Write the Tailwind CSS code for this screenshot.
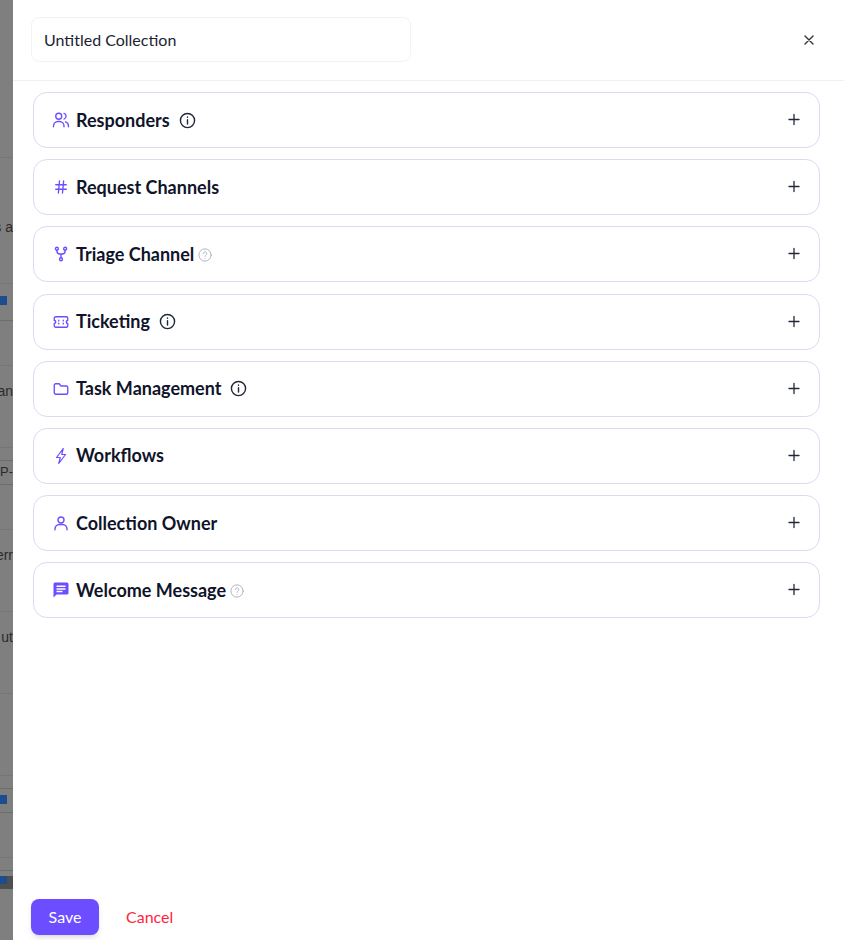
<!DOCTYPE html>
<html lang="en">
<head>
    <meta charset="UTF-8">
    <meta name="viewport" content="width=device-width, initial-scale=1.0">
    <title>Untitled Collection</title>
    <script src="https://cdn.jsdelivr.net/npm/@tailwindcss/browser@4"></script>
</head>
<body class="bg-white font-['Lato',sans-serif]">
    <div class="flex h-[940px] w-[844px] overflow-hidden">
        <!-- page behind the drawer -->
        <div class="relative h-full w-[13px] shrink-0 overflow-hidden bg-[#7f7f7f] text-[14px] text-[#2b2b2b] font-['Liberation_Sans',sans-serif]">
            <div class="absolute top-[157px] left-0 h-px w-full bg-[#767676]"></div>
            <div class="absolute top-[218px] right-0 whitespace-nowrap leading-[18px]">s a</div>
            <div class="absolute top-[283px] left-0 h-px w-full bg-[#767676]"></div>
            <div class="absolute top-[296px] left-0 h-[9px] w-[7px] bg-[#1d4c8f]"></div>
            <div class="absolute top-[320px] left-0 h-px w-full bg-[#6c6c6c]"></div>
            <div class="absolute top-[365px] left-0 h-px w-full bg-[#767676]"></div>
            <div class="absolute top-[382px] right-0 whitespace-nowrap leading-[18px]">an</div>
            <div class="absolute top-[447px] left-0 h-px w-full bg-[#767676]"></div>
            <div class="absolute top-[460px] left-0 h-px w-full bg-[#6c6c6c]"></div>
            <div class="absolute top-[464px] right-0 whitespace-nowrap text-[13px] leading-[16px]">P-</div>
            <div class="absolute top-[484px] left-0 h-px w-full bg-[#6c6c6c]"></div>
            <div class="absolute top-[529px] left-0 h-px w-full bg-[#767676]"></div>
            <div class="absolute top-[546px] right-0 whitespace-nowrap leading-[18px]">err</div>
            <div class="absolute top-[611px] left-0 h-px w-full bg-[#767676]"></div>
            <div class="absolute top-[628px] right-0 whitespace-nowrap leading-[18px]">ut</div>
            <div class="absolute top-[693px] left-0 h-px w-full bg-[#767676]"></div>
            <div class="absolute top-[775px] left-0 h-px w-full bg-[#767676]"></div>
            <div class="absolute top-[788px] left-0 h-px w-full bg-[#6c6c6c]"></div>
            <div class="absolute top-[795px] left-0 h-[9px] w-[7px] bg-[#1d4c8f]"></div>
            <div class="absolute top-[812px] left-0 h-px w-full bg-[#6c6c6c]"></div>
            <div class="absolute top-[857px] left-0 h-px w-full bg-[#767676]"></div>
            <div class="absolute top-[870px] left-0 h-px w-full bg-[#6c6c6c]"></div>
            <div class="absolute top-[876px] left-0 h-[13px] w-full bg-[#4f4f4f]"></div>
            <div class="absolute top-[876px] left-0 h-[8px] w-[7px] bg-[#1d4c8f]"></div>
        </div>

        <!-- drawer -->
        <div class="flex h-full min-w-0 flex-1 flex-col bg-white">
            <div class="flex h-[81px] shrink-0 items-center justify-between border-b border-[#f0f0f2] pr-[27px] pl-[18px]">
                <div class="mt-[-1px] flex h-[45px] w-[380px] items-center rounded-lg border border-[#f3f3f5] px-[12px] text-[16px] text-[#1c2333]">Untitled Collection</div>
                <svg class="h-[16px] w-[16px] text-[#333]" viewBox="0 0 16 16" fill="none" stroke="currentColor" stroke-width="1.4" stroke-linecap="round"><path d="M4 4l8 8M12 4l-8 8"/></svg>
            </div>

            <div class="flex flex-1 flex-col gap-[11.2px] pt-[11px] pr-[24px] pl-[20px]">
                <div class="flex h-[56px] shrink-0 items-center justify-between rounded-[14px] border border-[#dcdaee] pr-[18px] pl-[18px]">
                    <div class="flex items-center text-[18px] font-bold text-[#10142a]">
                        <svg class="mr-[6px] h-[18px] w-[18px] text-[#6c4dff]" viewBox="0 0 24 24" fill="none" stroke="currentColor" stroke-width="1.8" stroke-linecap="round" stroke-linejoin="round"><circle cx="9" cy="7" r="4"/><path d="M2 21v-1a6 6 0 0 1 6-6h2a6 6 0 0 1 6 6v1"/><path d="M16 3.2a4 4 0 0 1 0 7.6"/><path d="M22 21v-1a6 6 0 0 0-4-5.6"/></svg>
                        <span>Responders</span>
                        <svg class="ml-[9px] h-[17px] w-[17px] text-[#222838]" viewBox="0 0 24 24" fill="none" stroke="currentColor" stroke-width="2" stroke-linecap="round"><circle cx="12" cy="12" r="10"/><path d="M12 11v6M12 7v.5"/></svg>
                    </div>
                    <svg class="h-[14px] w-[14px] text-[#222838]" viewBox="0 0 14 14" fill="none" stroke="currentColor" stroke-width="1.3" stroke-linecap="round"><path d="M7 1.5v10M2 6.5h10"/></svg>
                </div>
                <div class="flex h-[56px] shrink-0 items-center justify-between rounded-[14px] border border-[#dcdaee] pr-[18px] pl-[18px]">
                    <div class="flex items-center text-[18px] font-bold text-[#10142a]">
                        <svg class="mr-[6px] h-[18px] w-[18px] text-[#6c4dff]" viewBox="0 0 24 24" fill="none" stroke="currentColor" stroke-width="1.8" stroke-linecap="round"><path d="M5 9h14M5 15h14M10 4L8.5 20M15.5 4L14 20"/></svg>
                        <span>Request Channels</span>
                    </div>
                    <svg class="h-[14px] w-[14px] text-[#222838]" viewBox="0 0 14 14" fill="none" stroke="currentColor" stroke-width="1.3" stroke-linecap="round"><path d="M7 1.5v10M2 6.5h10"/></svg>
                </div>
                <div class="flex h-[56px] shrink-0 items-center justify-between rounded-[14px] border border-[#dcdaee] pr-[18px] pl-[18px]">
                    <div class="flex items-center text-[18px] font-bold text-[#10142a]">
                        <svg class="mr-[6px] h-[18px] w-[18px] text-[#6c4dff]" viewBox="0 0 24 24" fill="none" stroke="currentColor" stroke-width="1.8" stroke-linecap="round" stroke-linejoin="round"><circle cx="6.5" cy="5" r="2"/><circle cx="17.5" cy="5" r="2"/><circle cx="12" cy="19" r="2"/><path d="M6.5 7v1a4 4 0 0 0 4 4h3a4 4 0 0 0 4-4V7M12 12v5"/></svg>
                        <span>Triage Channel</span>
                        <svg class="mt-[2px] ml-[4px] h-[14px] w-[14px] text-[#a9b0bf]" viewBox="0 0 24 24" fill="none" stroke="currentColor" stroke-width="1.6" stroke-linecap="round"><circle cx="12" cy="12" r="10.5"/><path d="M9 9.5a3 3 0 1 1 4.5 2.6c-1 .6-1.5 1.2-1.5 2.4M12 18v.3"/></svg>
                    </div>
                    <svg class="h-[14px] w-[14px] text-[#222838]" viewBox="0 0 14 14" fill="none" stroke="currentColor" stroke-width="1.3" stroke-linecap="round"><path d="M7 1.5v10M2 6.5h10"/></svg>
                </div>
                <div class="flex h-[56px] shrink-0 items-center justify-between rounded-[14px] border border-[#dcdaee] pr-[18px] pl-[18px]">
                    <div class="flex items-center text-[18px] font-bold text-[#10142a]">
                        <svg class="mr-[6px] h-[18px] w-[18px] text-[#6c4dff]" viewBox="0 0 24 24" fill="none" stroke="currentColor" stroke-width="1.8" stroke-linejoin="round"><path d="M3 7a2 2 0 0 1 2-2h14a2 2 0 0 1 2 2v3a2 2 0 0 0 0 4v3a2 2 0 0 1-2 2H5a2 2 0 0 1-2-2v-3a2 2 0 0 0 0-4z"/><path d="M9 9.5v1M9 13.500v1M15 9.500v1M15 13.500v1" stroke-linecap="round"/></svg>
                        <span>Ticketing</span>
                        <svg class="ml-[9px] h-[17px] w-[17px] text-[#222838]" viewBox="0 0 24 24" fill="none" stroke="currentColor" stroke-width="2" stroke-linecap="round"><circle cx="12" cy="12" r="10"/><path d="M12 11v6M12 7v.5"/></svg>
                    </div>
                    <svg class="h-[14px] w-[14px] text-[#222838]" viewBox="0 0 14 14" fill="none" stroke="currentColor" stroke-width="1.3" stroke-linecap="round"><path d="M7 1.5v10M2 6.5h10"/></svg>
                </div>
                <div class="flex h-[56px] shrink-0 items-center justify-between rounded-[14px] border border-[#dcdaee] pr-[18px] pl-[18px]">
                    <div class="flex items-center text-[18px] font-bold text-[#10142a]">
                        <svg class="mr-[6px] h-[18px] w-[18px] text-[#6c4dff]" viewBox="0 0 24 24" fill="none" stroke="currentColor" stroke-width="1.8" stroke-linejoin="round"><path d="M3 7a2 2 0 0 1 2-2h4.500l2.500 3h7a2 2 0 0 1 2 2v7a2 2 0 0 1-2 2H5a2 2 0 0 1-2-2z"/></svg>
                        <span>Task Management</span>
                        <svg class="ml-[9px] h-[17px] w-[17px] text-[#222838]" viewBox="0 0 24 24" fill="none" stroke="currentColor" stroke-width="2" stroke-linecap="round"><circle cx="12" cy="12" r="10"/><path d="M12 11v6M12 7v.5"/></svg>
                    </div>
                    <svg class="h-[14px] w-[14px] text-[#222838]" viewBox="0 0 14 14" fill="none" stroke="currentColor" stroke-width="1.3" stroke-linecap="round"><path d="M7 1.5v10M2 6.5h10"/></svg>
                </div>
                <div class="flex h-[56px] shrink-0 items-center justify-between rounded-[14px] border border-[#dcdaee] pr-[18px] pl-[18px]">
                    <div class="flex items-center text-[18px] font-bold text-[#10142a]">
                        <svg class="mr-[6px] h-[18px] w-[18px] text-[#6c4dff]" viewBox="0 0 24 24" fill="none" stroke="currentColor" stroke-width="1.6" stroke-linejoin="round"><path d="M15 2L6 14h5l-2 8 9-12h-5z"/></svg>
                        <span>Workflows</span>
                    </div>
                    <svg class="h-[14px] w-[14px] text-[#222838]" viewBox="0 0 14 14" fill="none" stroke="currentColor" stroke-width="1.3" stroke-linecap="round"><path d="M7 1.5v10M2 6.5h10"/></svg>
                </div>
                <div class="flex h-[56px] shrink-0 items-center justify-between rounded-[14px] border border-[#dcdaee] pr-[18px] pl-[18px]">
                    <div class="flex items-center text-[18px] font-bold text-[#10142a]">
                        <svg class="mr-[6px] h-[18px] w-[18px] text-[#6c4dff]" viewBox="0 0 24 24" fill="none" stroke="currentColor" stroke-width="1.9" stroke-linecap="round"><circle cx="12" cy="8" r="4"/><path d="M4 21v-1a6 6 0 0 1 6-6h4a6 6 0 0 1 6 6v1"/></svg>
                        <span>Collection Owner</span>
                    </div>
                    <svg class="h-[14px] w-[14px] text-[#222838]" viewBox="0 0 14 14" fill="none" stroke="currentColor" stroke-width="1.3" stroke-linecap="round"><path d="M7 1.5v10M2 6.5h10"/></svg>
                </div>
                <div class="flex h-[56px] shrink-0 items-center justify-between rounded-[14px] border border-[#dcdaee] pr-[18px] pl-[18px]">
                    <div class="flex items-center text-[18px] font-bold text-[#10142a]">
                        <svg class="mr-[6px] h-[18px] w-[18px] text-[#6c4dff]" viewBox="0 0 24 24" fill="currentColor"><path d="M4 2h16a2 2 0 0 1 2 2v12a2 2 0 0 1-2 2H6l-4 4V4a2 2 0 0 1 2-2zm2 4v2h12V6zm0 3.500v2h12v-2zm0 3.500v2h8v-2z" fill-rule="evenodd"/></svg>
                        <span>Welcome Message</span>
                        <svg class="mt-[2px] ml-[4px] h-[14px] w-[14px] text-[#a9b0bf]" viewBox="0 0 24 24" fill="none" stroke="currentColor" stroke-width="1.6" stroke-linecap="round"><circle cx="12" cy="12" r="10.500"/><path d="M9 9.500a3 3 0 1 1 4.500 2.600c-1 .6-1.500 1.200-1.500 2.400M12 18v.3"/></svg>
                    </div>
                    <svg class="h-[14px] w-[14px] text-[#222838]" viewBox="0 0 14 14" fill="none" stroke="currentColor" stroke-width="1.3" stroke-linecap="round"><path d="M7 1.500v10M2 6.500h10"/></svg>
                </div>
            </div>

            <div class="flex h-[41px] shrink-0 items-start pl-[18px]">
                <button class="h-[36px] w-[68px] rounded-lg bg-[#6c4dff] text-[16px] text-white shadow-md">Save</button>
                <button class="ml-[27px] h-[36px] text-[16px] text-[#ff1f3d]">Cancel</button>
            </div>
        </div>
    </div>
</body>
</html>
